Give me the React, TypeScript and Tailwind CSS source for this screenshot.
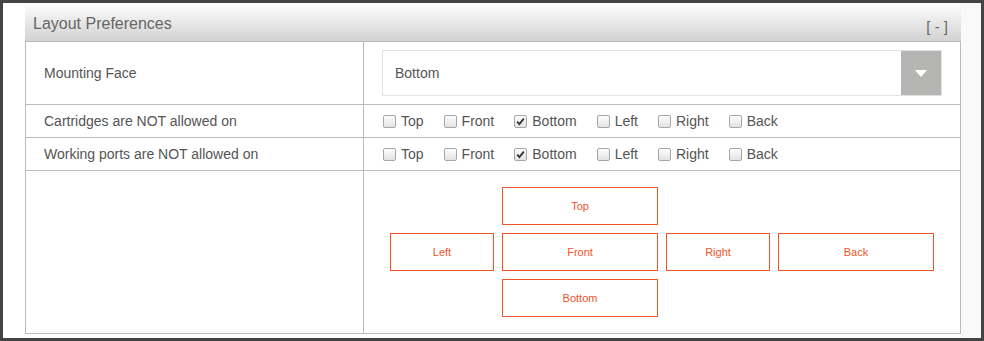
const FACES = ["Top", "Front", "Bottom", "Left", "Right", "Back"];

function Box({ checked }: { checked: boolean }) {
  return (
    <span className="relative inline-block h-[13px] w-[13px] shrink-0 rounded-[2px] border border-[#a6a6a6] bg-linear-to-b from-[#fdfdfd] to-[#e3e3e3]">
      {checked && (
        <svg viewBox="0 0 13 13" className="absolute -left-px -top-px h-[13px] w-[13px]">
          <path d="M3.2 6.6 L5.4 9 L9.8 3.6" fill="none" stroke="#333" strokeWidth="1.8" />
        </svg>
      )}
    </span>
  );
}

function CheckRow({ label }: { label: string }) {
  return (
    <div className="flex h-[33px] border-b border-[#bbbbbb]">
      <div className="flex w-[338px] shrink-0 items-center border-r border-[#bbbbbb] pl-[18px]">
        {label}
      </div>
      <div className="flex items-center gap-[20px] pl-[19px]">
        {FACES.map((f) => (
          <label key={f} className="flex items-center gap-[5px]">
            <Box checked={f === "Bottom"} />
            <span>{f}</span>
          </label>
        ))}
      </div>
    </div>
  );
}

function Face({ name, wide }: { name: string; wide?: boolean }) {
  return (
    <div
      className={`flex h-[38px] items-center justify-center border border-[#f0542a] text-[11px] text-[#f0542a] ${
        wide ? "w-[156px]" : "w-[104px]"
      }`}
    >
      {name}
    </div>
  );
}

export default function App() {
  return (
    <div
      className="flex h-[341px] w-[984px] bg-[#444444] p-[3px] text-[14px] text-[#555555]"
      style={{ fontFamily: '"Liberation Sans", Arial, sans-serif' }}
    >
      <div className="flex-1 bg-white pl-[22px]">
        <div className="w-[936px]">
          {/* header */}
          <div className="flex h-[39px] items-center justify-between border-b border-[#bbbbbb] bg-linear-to-b from-[#fefefe] to-[#d2d2d2] pl-[8px] pr-[13px]">
            <span className="mt-[3px] text-[16px] text-[#666666]">Layout Preferences</span>
            <span className="mt-[11px] text-[15px] text-[#666666]">[ - ]</span>
          </div>

          <div className="border-x border-[#bbbbbb]">
            <div className="flex h-[63px] border-b border-[#bbbbbb]">
              <div className="flex w-[338px] shrink-0 items-center border-r border-[#bbbbbb] pl-[18px]">
                Mounting Face
              </div>
              <div className="flex flex-1 items-center px-[18px]">
                <div className="flex h-[46px] flex-1 items-stretch border border-[#e2e2e2]">
                  <div className="flex flex-1 items-center pl-[12px]">Bottom</div>
                  <div className="flex w-[40px] items-center justify-center bg-[#b5b5b3]">
                    <svg width="12" height="7" viewBox="0 0 12 7">
                      <path d="M0 0 H12 L6 7 Z" fill="#fff" />
                    </svg>
                  </div>
                </div>
              </div>
            </div>

            <CheckRow label="Cartridges are NOT allowed on" />
            <CheckRow label="Working ports are NOT allowed on" />

            <div className="flex h-[163px] border-b border-[#bbbbbb]">
              <div className="w-[338px] shrink-0 border-r border-[#bbbbbb]" />
              <div className="flex flex-1 items-center justify-center">
                <div className="grid grid-cols-[104px_156px_104px_156px] gap-[8px]">
                  <div />
                  <Face name="Top" wide />
                  <div />
                  <div />
                  <Face name="Left" />
                  <Face name="Front" wide />
                  <Face name="Right" />
                  <Face name="Back" wide />
                  <div />
                  <Face name="Bottom" wide />
                </div>
              </div>
            </div>
          </div>
        </div>
      </div>
      <div className="w-[20px] bg-[#f9f9f9]" />
    </div>
  );
}
